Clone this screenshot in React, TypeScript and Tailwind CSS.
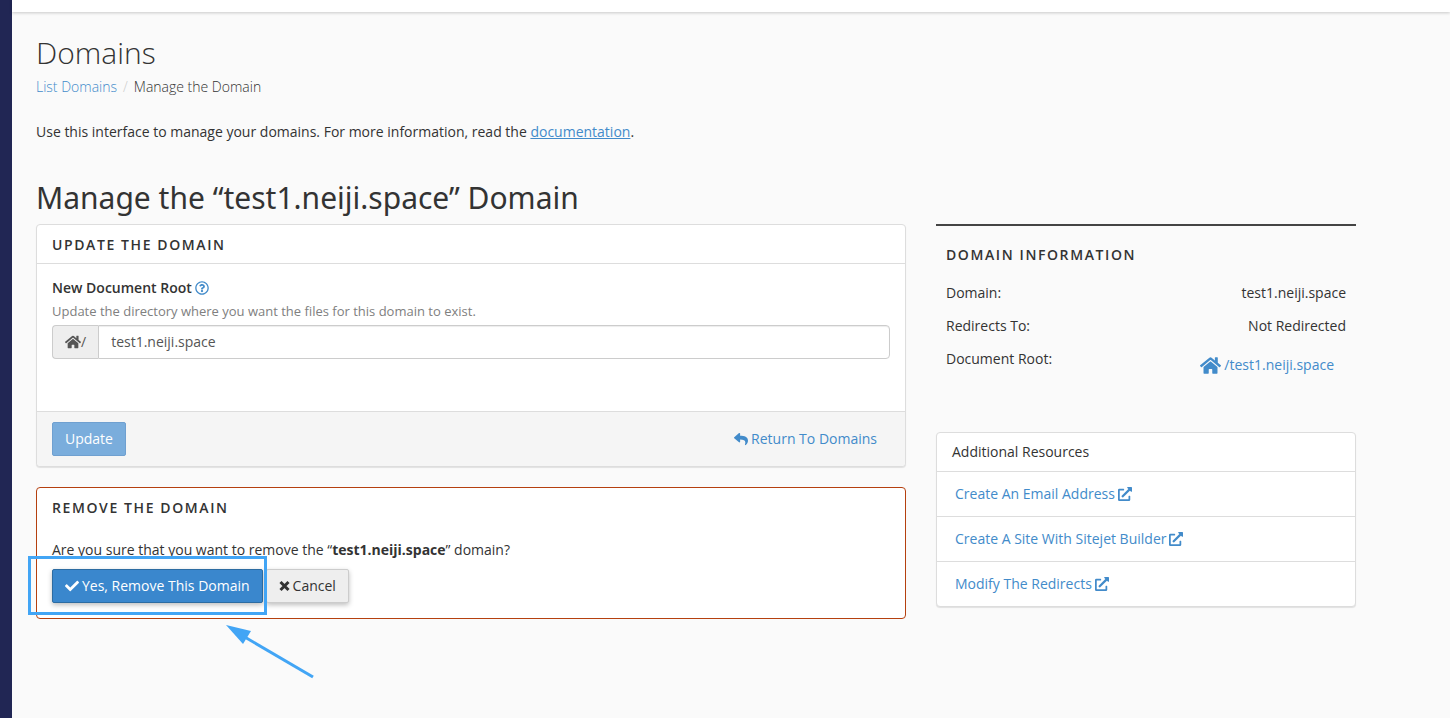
import { useState } from "react";
import type { ReactNode } from "react";
import {
  FaCheck,
  FaExternalLinkAlt,
  FaHome,
  FaRegQuestionCircle,
  FaReply,
} from "react-icons/fa";

const DOMAIN = "test1.neiji.space";

const resources = [
  "Create An Email Address",
  "Create A Site With Sitejet Builder",
  "Modify The Redirects",
];

function SectionTitle({ children }: { children: ReactNode }) {
  return (
    <h3 className="text-sm leading-5 font-semibold tracking-[1.6px] text-[#333333] uppercase">
      {children}
    </h3>
  );
}

function CrossIcon() {
  return (
    <svg width="11" height="14" viewBox="0 0 11 14" aria-hidden="true">
      <path d="M1.5 3L9.5 11M9.5 3L1.5 11" stroke="currentColor" strokeWidth="3" />
    </svg>
  );
}

function Annotation() {
  return (
    <div className="pointer-events-none absolute -top-[13px] -left-6 h-[59px] w-[239px] border-[3px] border-[#42a5f5]">
      <svg
        className="absolute top-[65px] left-[194px]"
        width="92"
        height="56"
        viewBox="0 0 92 56"
        aria-hidden="true"
      >
        <path d="M18 12L88 53" stroke="#42a5f5" strokeWidth="3" />
        <path d="M1 1L26 7L18 20Z" fill="#42a5f5" />
      </svg>
    </div>
  );
}

function UpdatePanel() {
  const [root, setRoot] = useState(DOMAIN);
  return (
    <section className="rounded border border-[#dddddd] bg-white shadow-[0_1px_1px_rgba(0,0,0,0.1)]">
      <header className="border-b border-[#dddddd] px-[15px] pt-[10px] pb-2">
        <SectionTitle>Update the Domain</SectionTitle>
      </header>
      <div className="px-[15px] pt-[14px] pb-[52px]">
        <div className="flex items-center gap-[3px]">
          <label htmlFor="document-root" className="leading-5 font-semibold">
            New Document Root
          </label>
          <button type="button" aria-label="Help" className="text-[#428bca]">
            <FaRegQuestionCircle size={14} />
          </button>
        </div>
        <p className="mt-[3px] text-[13px] leading-5 text-[#808080]">
          Update the directory where you want the files for this domain to exist.
        </p>
        <div className="mt-1 flex h-[34px]">
          <span className="flex items-center rounded-l border border-r-0 border-[#cccccc] bg-[#eeeeee] px-3 text-[#555555]">
            <FaHome size={16} />/
          </span>
          <input
            id="document-root"
            type="text"
            value={root}
            onChange={(e) => setRoot(e.target.value)}
            className="min-w-0 flex-1 rounded-r border border-[#cccccc] bg-white px-3 text-[#555555] shadow-[inset_0_1px_1px_rgba(0,0,0,0.075)] outline-none"
          />
        </div>
      </div>
      <footer className="flex items-center justify-between rounded-b border-t border-[#dddddd] bg-[#f5f5f5] py-[10px] pr-7 pl-[15px]">
        <button
          type="button"
          disabled
          className="h-[34px] rounded-xs border border-[#6fa0d0] bg-[#7aaddc] px-3 text-white"
        >
          Update
        </button>
        <a href="#domains" className="flex items-center gap-[3px] text-[#428bca]">
          <FaReply size={14} />
          Return To Domains
        </a>
      </footer>
    </section>
  );
}

function RemovePanel() {
  return (
    <section className="rounded border border-[#b5400f] bg-white px-[15px] pt-[10px] pb-[15px]">
      <SectionTitle>Remove the Domain</SectionTitle>
      <p className="mt-[22px] leading-5">
        Are you sure that you want to remove the “<b>{DOMAIN}</b>” domain?
      </p>
      <div className="relative mt-[9px] flex gap-[3px]">
        <button
          type="button"
          className="flex h-[34px] items-center gap-[3px] rounded-xs border border-[#2d6ca2] bg-[#3a87cd] px-3 text-white shadow-[0_2px_5px_rgba(0,0,0,0.26)]"
        >
          <FaCheck size={14} />
          Yes, Remove This Domain
        </button>
        <button
          type="button"
          className="flex h-[34px] items-center gap-[3px] rounded-xs border border-[#cccccc] bg-[#eeeeee] px-3 shadow-[0_2px_5px_rgba(0,0,0,0.26)]"
        >
          <CrossIcon />
          Cancel
        </button>
        <Annotation />
      </div>
    </section>
  );
}

function DomainInformation() {
  return (
    <section className="border-t-2 border-[#444444] px-[10px] pt-[19px]">
      <SectionTitle>Domain Information</SectionTitle>
      <dl className="mt-[18px] grid gap-[13px] leading-5">
        <div className="flex justify-between">
          <dt>Domain:</dt>
          <dd>{DOMAIN}</dd>
        </div>
        <div className="flex justify-between">
          <dt>Redirects To:</dt>
          <dd>Not Redirected</dd>
        </div>
        <div className="flex justify-between">
          <dt>Document Root:</dt>
          <dd className="px-3 py-[6px]">
            <a href="#root" className="flex h-5 items-center gap-[3px] text-[#428bca]">
              <FaHome size={21} />/{DOMAIN}
            </a>
          </dd>
        </div>
      </dl>
    </section>
  );
}

function Resources() {
  return (
    <section className="mt-[51px] rounded border border-[#dddddd] bg-white shadow-[0_1px_1px_rgba(0,0,0,0.1)]">
      <h4 className="px-[15px] py-[9px] leading-5">Additional Resources</h4>
      <ul>
        {resources.map((name) => (
          <li key={name} className="border-t border-[#dddddd] px-[18px] py-3 leading-5">
            <a href="#resource" className="inline-flex items-center gap-[3px] text-[#428bca]">
              {name}
              <FaExternalLinkAlt size={14} />
            </a>
          </li>
        ))}
      </ul>
    </section>
  );
}

export default function App() {
  return (
    <div className="flex min-h-screen bg-[#fafafa] font-['Open_Sans',sans-serif] text-sm text-[#333333]">
      <aside className="w-3 shrink-0 bg-[#212654]" />
      <div className="min-w-0 flex-1">
        <div className="h-3 bg-white shadow-[0_1px_3px_rgba(0,0,0,0.2)]" />
        <main className="px-6 pt-[24px]">
          <h1 className="text-[30px] leading-[33px] font-light">Domains</h1>
          <nav aria-label="Breadcrumb" className="mt-2 flex leading-5 font-light">
            <a href="#list" className="text-[#428bca]">
              List Domains
            </a>
            <span className="px-[6px] text-[#cccccc]">/</span>
            <span>Manage the Domain</span>
          </nav>
          <p className="mt-[25px] leading-5">
            Use this interface to manage your domains. For more information, read the{" "}
            <a href="#docs" className="text-[#428bca] underline">
              documentation
            </a>
            .
          </p>
          <h2 className="mt-[39px] font-['Noto_Sans','Open_Sans',sans-serif] text-[30px] leading-[33px]">
            Manage the “{DOMAIN}” Domain
          </h2>
          <div className="mt-[10px] grid max-w-[1320px] grid-cols-12 items-start gap-x-[30px]">
            <div className="col-span-8 grid gap-5">
              <UpdatePanel />
              <RemovePanel />
            </div>
            <aside className="col-span-4">
              <DomainInformation />
              <Resources />
            </aside>
          </div>
        </main>
      </div>
    </div>
  );
}
